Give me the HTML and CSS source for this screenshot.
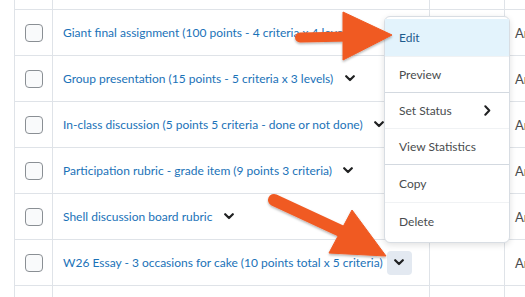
FILE: index.html
```html
<!DOCTYPE html>
<html>
<head>
<meta charset="utf-8">
<link rel="stylesheet" href="styles.css">
</head>
<body>
<div class="page">
  <div class="table">
    <div class="row row-top">
      <div class="cell c1"></div><div class="cell c2"></div><div class="cell c3"></div><div class="cell c4"></div>
    </div>
    <div class="row">
      <div class="cell c1"><span class="check"></span></div>
      <div class="cell c2"><a class="name">Giant final assignment (100 points - 4 criteria x 4 levels)</a><span class="chev"><svg width="10" height="7" viewBox="0 0 10 7"><path d="M1.2 1.2 L5 5 L8.8 1.2" fill="none" stroke="#202122" stroke-width="2.2" stroke-linecap="round" stroke-linejoin="round"/></svg></span></div>
      <div class="cell c3"></div>
      <div class="cell c4">Ar</div>
    </div>
    <div class="row">
      <div class="cell c1"><span class="check"></span></div>
      <div class="cell c2"><a class="name">Group presentation (15 points - 5 criteria x 3 levels)</a><span class="chev"><svg width="10" height="7" viewBox="0 0 10 7"><path d="M1.2 1.2 L5 5 L8.8 1.2" fill="none" stroke="#202122" stroke-width="2.2" stroke-linecap="round" stroke-linejoin="round"/></svg></span></div>
      <div class="cell c3"></div>
      <div class="cell c4">Ar</div>
    </div>
    <div class="row">
      <div class="cell c1"><span class="check"></span></div>
      <div class="cell c2"><a class="name">In-class discussion (5 points 5 criteria - done or not done)</a><span class="chev"><svg width="10" height="7" viewBox="0 0 10 7"><path d="M1.2 1.2 L5 5 L8.8 1.2" fill="none" stroke="#202122" stroke-width="2.2" stroke-linecap="round" stroke-linejoin="round"/></svg></span></div>
      <div class="cell c3"></div>
      <div class="cell c4">Ar</div>
    </div>
    <div class="row">
      <div class="cell c1"><span class="check"></span></div>
      <div class="cell c2"><a class="name">Participation rubric - grade item (9 points 3 criteria)</a><span class="chev"><svg width="10" height="7" viewBox="0 0 10 7"><path d="M1.2 1.2 L5 5 L8.8 1.2" fill="none" stroke="#202122" stroke-width="2.2" stroke-linecap="round" stroke-linejoin="round"/></svg></span></div>
      <div class="cell c3"></div>
      <div class="cell c4">Ar</div>
    </div>
    <div class="row">
      <div class="cell c1"><span class="check"></span></div>
      <div class="cell c2"><a class="name">Shell discussion board rubric</a><span class="chev"><svg width="10" height="7" viewBox="0 0 10 7"><path d="M1.2 1.2 L5 5 L8.8 1.2" fill="none" stroke="#202122" stroke-width="2.2" stroke-linecap="round" stroke-linejoin="round"/></svg></span></div>
      <div class="cell c3"></div>
      <div class="cell c4">Ar</div>
    </div>
    <div class="row">
      <div class="cell c1"><span class="check"></span></div>
      <div class="cell c2"><a class="name">W26 Essay - 3 occasions for cake (10 points total x 5 criteria)</a><span class="chev active"><svg width="10" height="7" viewBox="0 0 10 7"><path d="M1.2 1.2 L5 5 L8.8 1.2" fill="none" stroke="#202122" stroke-width="2.2" stroke-linecap="round" stroke-linejoin="round"/></svg></span></div>
      <div class="cell c3"></div>
      <div class="cell c4">Ar</div>
    </div>
    <div class="row row-bottom">
      <div class="cell c1"></div><div class="cell c2"></div><div class="cell c3"></div><div class="cell c4"></div>
    </div>
  </div>

  <div class="menu">
    <div class="item selected">Edit</div>
    <div class="item group-end">Preview</div>
    <div class="item">Set Status<svg class="sub" width="7" height="11" viewBox="0 0 7 11"><path d="M1.3 1.3 L5.3 5.5 L1.3 9.7" fill="none" stroke="#202122" stroke-width="2" stroke-linecap="round" stroke-linejoin="round"/></svg></div>
    <div class="item group-end">View Statistics</div>
    <div class="item tall">Copy</div>
    <div class="item tall last">Delete</div>
  </div>

  <svg class="arrows" width="525" height="297" viewBox="0 0 525 297">
    <defs>
      <filter id="sh" x="-20%" y="-20%" width="140%" height="140%">
        <feDropShadow dx="0" dy="1.5" stdDeviation="1.2" flood-color="#000" flood-opacity="0.3"/>
      </filter>
    </defs>
    <g filter="url(#sh)" fill="#f05a24" stroke="#f05a24">
      <line x1="300" y1="37.5" x2="350" y2="36.5" stroke-width="10" stroke-linecap="round"/>
      <polygon points="343,12 392,35 343,60" stroke-width="1" stroke-linejoin="round"/>
      <line x1="274" y1="200" x2="343" y2="232" stroke-width="12" stroke-linecap="round"/>
      <polygon points="352,210 386,256 329,253" stroke-width="1" stroke-linejoin="round"/>
    </g>
  </svg>
</div>
</body>
</html>
```

FILE: styles.css
```css
html, body {
  margin: 0;
  padding: 0;
  background: #ffffff;
}
body {
  width: 525px;
  height: 297px;
  overflow: hidden;
  font-family: Lato, "Noto Sans", sans-serif;
  font-size: 12px;
}
.page {
  position: relative;
  width: 525px;
  height: 297px;
  overflow: hidden;
}
.table {
  margin-left: 14px;
  border-left: 1px solid #dfe3e8;
  width: 540px;
}
.row {
  display: grid;
  grid-template-columns: 38px 377px 75px 1fr;
  height: 46px;
  box-sizing: border-box;
  border-bottom: 1px solid #dfe3e8;
}
.row-top {
  height: 10px;
}
.row-bottom {
  height: 30px;
  border-bottom: none;
}
.cell {
  box-sizing: border-box;
  border-right: 1px solid #dfe3e8;
  display: flex;
  align-items: center;
  min-width: 0;
}
.c1 {
  justify-content: center;
}
.c2 {
  padding-left: 10px;
  white-space: nowrap;
}
.c4 {
  border-right: none;
  padding-left: 10px;
  color: #494c4e;
  font-size: 13px;
}
.check {
  display: block;
  width: 18px;
  height: 18px;
  box-sizing: border-box;
  border: 1.5px solid #8a8f94;
  border-radius: 4px;
  background: #f9fafb;
  margin-top: 1px;
}
.name {
  color: #1a72b8;
  text-decoration: none;
}
.chev {
  display: flex;
  align-items: center;
  justify-content: center;
  width: 25px;
  height: 24px;
  margin-left: 4px;
  border-radius: 4px;
}
.chev.active {
  background: #e3e9f1;
}
.menu {
  position: absolute;
  left: 384px;
  top: 16px;
  width: 126px;
  box-sizing: border-box;
  padding: 2px 0 1px;
  background: #fff;
  border: 1px solid #d8dde3;
  border-radius: 6px;
  box-shadow: 0 2px 6px rgba(0, 0, 0, 0.12);
  color: #494c4e;
}
.item {
  height: 36px;
  box-sizing: border-box;
  display: flex;
  align-items: center;
  justify-content: space-between;
  padding: 0 14px 1px 14px;
  border-bottom: 1px solid #f0f2f4;
}
.item.selected {
  background: #e3f3fc;
  color: #1c5a8c;
  height: 38px;
}
.item.tall {
  height: 38px;
}
.item.group-end {
  border-bottom: 1px solid #d3d9e0;
}
.item.last {
  border-bottom: none;
}
.sub {
  margin-right: 4px;
}
.arrows {
  position: absolute;
  left: 0;
  top: 0;
  pointer-events: none;
}
```
